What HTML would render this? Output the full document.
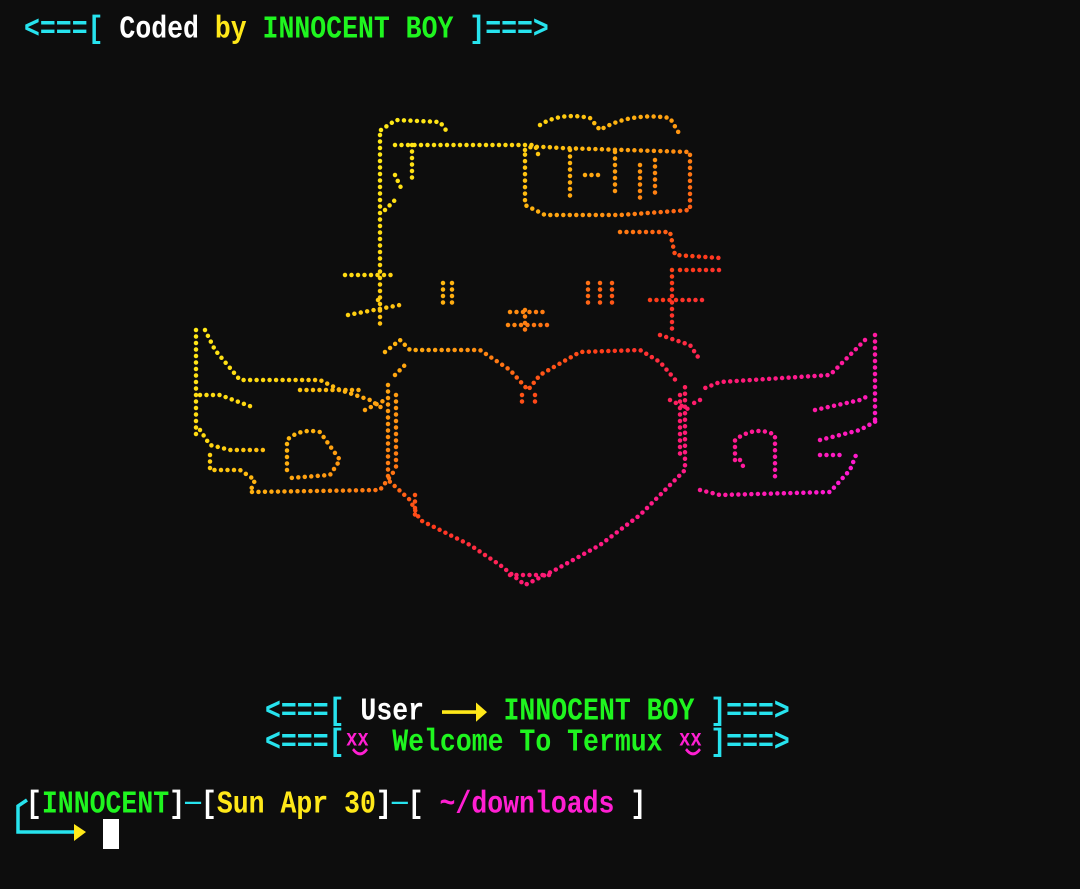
<!DOCTYPE html>
<html><head><meta charset="utf-8"><style>
html,body{margin:0;padding:0;background:#0d0d0d;width:1080px;height:889px;overflow:hidden}
.l{position:absolute;font-family:"Liberation Mono","DejaVu Sans Mono",monospace;font-size:26.5px;font-weight:bold;line-height:31px;white-space:pre;transform:scaleY(1.2);transform-origin:left center;}
.c{color:#27e3ee}.w{color:#fff}.y{color:#ffe819}.g{color:#1ff51f}.m{color:#ff1fd2}
.ib{display:inline-block;width:1.8ch;height:31px;vertical-align:top;position:relative}
svg{position:absolute;left:0;top:0}
</style></head><body>
<div class="l" style="left:24px;top:14px"><span class="c">&lt;===[</span><span class="w"> Coded </span><span class="y">by</span><span class="g"> INNOCENT BOY </span><span class="c">]===&gt;</span></div>

<svg width="1080" height="889" viewBox="0 0 1080 889">
<defs><linearGradient id="gr" gradientUnits="userSpaceOnUse" x1="330" y1="130" x2="760" y2="560">
<stop offset="0" stop-color="#fff01a"/><stop offset="0.22" stop-color="#ffd810"/><stop offset="0.42" stop-color="#ff9010"/><stop offset="0.58" stop-color="#ff3a1a"/><stop offset="0.75" stop-color="#ff1a70"/><stop offset="1" stop-color="#ff1ad0"/></linearGradient></defs>
<g fill="none" stroke="url(#gr)" stroke-width="4.5" stroke-linecap="round" stroke-dasharray="0 6.5">
<path d="M380 135 V330"/><path d="M381 130 L396 120 L440 122 L448 133"/>
<path d="M395 145 H535 L540 160"/><path d="M412 145 V180"/><path d="M395 175 L402 190"/>
<path d="M385 210 L395 200"/>
<path d="M540 125 Q560 112 590 118 L600 130 Q630 112 670 118 L680 135"/>
<path d="M525 150 Q525 145 560 148 L690 152 L690 210 L620 215 L545 215 L525 205 Z"/>
<path d="M570 150 V200 M615 152 V195 M640 165 V200 M655 160 V195 M585 175 H600"/>
<path d="M620 232 H670 L675 255 L720 258 M680 270 H720"/>
<path d="M672 270 V330"/>
<path d="M345 275 H395 M348 315 L400 305 M378 300 V295"/>
<path d="M650 300 H705"/><path d="M660 335 L690 345 L700 360"/>
<path d="M443 283 V305 M452 283 V305 M588 283 V305 M600 283 V305 M612 283 V305"/>
<path d="M510 312 H545 M508 325 H548 M525 310 V330"/>
<path d="M385 352 L400 340 L410 350 L480 350 L510 370 L528 390 L540 375 L580 352 L640 350 L660 362 L678 383"/>
<path d="M395 375 L405 365"/><path d="M522 395 V405 M535 395 V405"/>
<path d="M388 385 V480 L410 500 L420 520 L470 545 L500 565 L525 585 L555 570 L600 545 L640 515 L665 490 L685 470 V385"/>
<path d="M396 395 V470 M680 395 V460 M415 495 V520 M510 575 H550"/>
<path d="M196 330 V440 M205 330 L215 350 L240 380 H320 L340 390 L370 400 L385 410"/>
<path d="M200 395 H220 L255 408"/><path d="M200 430 L210 445 L230 450 H265"/>
<path d="M210 455 V470 L240 470 L255 480 L250 492 L380 490 L395 470"/>
<path d="M287 470 V440 Q300 428 320 432 L340 460 L330 475 L290 478"/>
<path d="M300 390 H360 M365 410 L385 400"/>
<path d="M875 335 V420 M865 340 L845 360 L830 375 L720 382 L700 390"/>
<path d="M815 410 L860 400 L870 395"/><path d="M820 440 L860 430 L878 420"/>
<path d="M700 490 L720 495 L830 492 L850 470 L858 450"/>
<path d="M735 460 V440 Q755 425 775 435 V480 M740 460 L745 470 M820 455 L845 455"/>
<path d="M700 400 L690 405 M670 400 L690 410"/>
</g>
<path d="M27 800 L18 806 V832 H76" stroke="#27e3ee" stroke-width="3.5" fill="none"/>
<path d="M74 824 L86 832 L74 841 Z" fill="#ffe819"/>
<rect x="103" y="819" width="16" height="30" fill="#fff"/>
</svg>

<div class="l" style="left:265px;top:696px"><span class="c">&lt;===[</span><span class="w"> User </span><span class="ib"><svg width="50" height="31"><path d="M2 16 H36" stroke="#ffe819" stroke-width="3"/><path d="M36 8 L47 16 L36 24Z" fill="#ffe819"/></svg></span><span class="ib" style="width:1.2ch"></span><span class="g"> INNOCENT BOY </span><span class="c">]===&gt;</span></div>
<div class="l" style="left:265px;top:727px"><span class="c">&lt;===[</span><span class="ib" style="width:2ch"><svg width="32" height="31"><text x="1" y="18" fill="#ff1fd2" font-family="Liberation Mono" font-size="19" font-weight="bold">xx</text><path d="M8 21 Q15 29 22 21" stroke="#ff1fd2" stroke-width="2.5" fill="none"/></svg></span><span class="g"> Welcome To Termux </span><span class="ib" style="width:2ch"><svg width="32" height="31"><text x="1" y="18" fill="#ff1fd2" font-family="Liberation Mono" font-size="19" font-weight="bold">xx</text><path d="M8 21 Q15 29 22 21" stroke="#ff1fd2" stroke-width="2.5" fill="none"/></svg></span><span class="c">]===&gt;</span></div>
<div class="l" style="left:26px;top:789px"><span class="w">[</span><span class="g">INNOCENT</span><span class="w">]</span><span class="c">─</span><span class="w">[</span><span class="y">Sun Apr 30</span><span class="w">]</span><span class="c">─</span><span class="w">[ </span><span class="m">~/downloads</span><span class="w"> ]</span></div>
</body></html>
